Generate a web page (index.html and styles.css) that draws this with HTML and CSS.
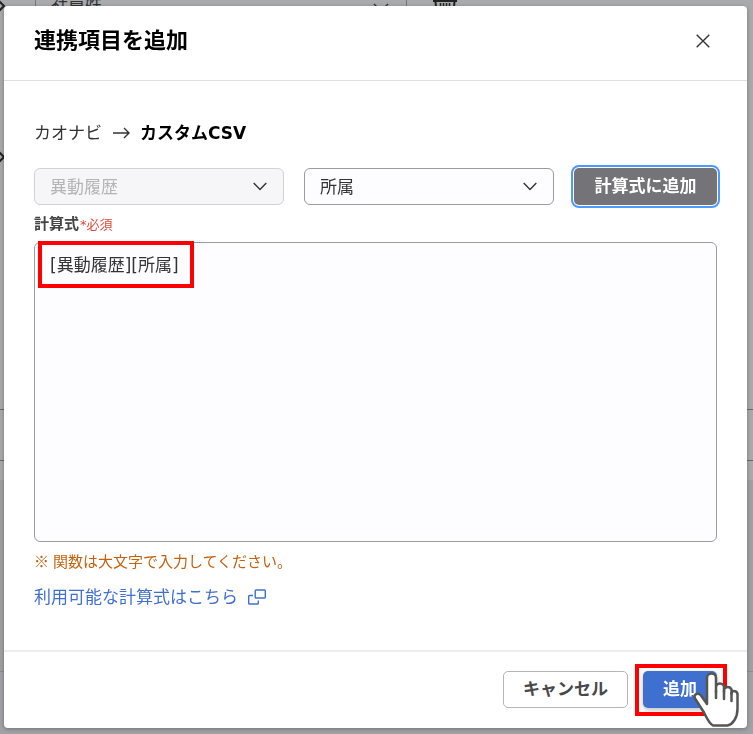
FILE: index.html
```html
<!DOCTYPE html>
<html lang="ja">
<head>
    <meta charset="UTF-8">
    <meta name="viewport" content="width=device-width, initial-scale=1.0">
    <title>連携項目を追加</title>
    <link rel="stylesheet" href="styles.css">
</head>
<body>
    <!-- 背面のページ -->
    <div class="backdrop" aria-hidden="true">
        <div class="page-top">
            <div class="page-field">
                <span>社員姓</span>
                <svg width="16" height="10" viewBox="0 0 16 10"><path d="M1 1l7 7 7-7"/></svg>
            </div>
            <svg class="trash" width="24" height="24" viewBox="0 0 24 24"><path stroke-width="3" d="M0 .5h24"/><path stroke-width="2" d="M2.500 2l2 20h15l2-20"/><path d="M7.500 3v14M10.500 3v14M13.500 3v14M16.500 3v14"/></svg>
        </div>
        <div class="page-row"></div>
        <div class="page-gap"></div>
        <div class="page-list"></div>
        <div class="page-foot"></div>
        <svg class="page-arrow arrow-top" width="6" height="12" viewBox="0 0 6 12"><path d="M-1 1l5 5-5 5"/></svg>
        <svg class="page-arrow arrow-middle" width="6" height="12" viewBox="0 0 6 12"><path d="M-1 1l5 5-5 5"/></svg>
    </div>

    <div class="modal" role="dialog" aria-labelledby="modal-title">
        <header class="modal-header">
            <h1 id="modal-title">連携項目を追加</h1>
            <button type="button" class="close" aria-label="閉じる">
                <svg width="14" height="14" viewBox="0 0 14 14"><path d="M.7.7l12.600 12.600M13.300.7L.7 13.300"/></svg>
            </button>
        </header>

        <div class="modal-body">
            <p class="mapping">
                <span>カオナビ</span>
                <svg width="18" height="12" viewBox="0 0 18 12" aria-hidden="true"><path d="M1 6h16M12 1l5 5-5 5"/></svg>
                <strong>カスタムCSV</strong>
            </p>

            <div class="selectors">
                <div class="select-box">
                    <select aria-label="シート" disabled>
                        <option>異動履歴</option>
                    </select>
                    <svg width="14" height="9" viewBox="0 0 14 9" aria-hidden="true"><path d="M.7 1L7 7.500 13.300 1"/></svg>
                </div>
                <div class="select-box">
                    <select aria-label="項目">
                        <option>所属</option>
                    </select>
                    <svg width="14" height="9" viewBox="0 0 14 9" aria-hidden="true"><path d="M.7 1L7 7.500 13.300 1"/></svg>
                </div>
                <button type="button" class="btn btn-gray">計算式に追加</button>
            </div>

            <label class="formula-label" for="formula">計算式<span class="required">*必須</span></label>
            <div class="formula">
                <textarea id="formula" spellcheck="false">[異動履歴][所属]</textarea>
                <span class="mark mark-formula"></span>
            </div>

            <p class="note">※ 関数は大文字で入力してください。</p>
            <a class="help" href="#">利用可能な計算式はこちら
                <svg width="18" height="16" viewBox="0 0 18 16" aria-hidden="true"><path d="M8 1h8.500a.8.8 0 0 1 .8.8v6.400a.8.8 0 0 1-.8.8H8a.8.8 0 0 1-.8-.8V1.800A.8.8 0 0 1 8 1zM5 6.500H1.500a.8.8 0 0 0-.8.8v6.900a.8.8 0 0 0 .8.8h8a.8.8 0 0 0 .8-.8V11.500"/></svg>
            </a>
        </div>

        <footer class="modal-footer">
            <button type="button" class="btn btn-outline">キャンセル</button>
            <div class="submit">
                <button type="button" class="btn btn-primary">追加</button>
                <span class="mark mark-submit"></span>
                <svg class="pointer" width="46" height="56" viewBox="0 0 46 56" aria-hidden="true">
                    <path d="M14 33V7a4.500 4.500 0 0 1 9 0v14V16.500a4 4 0 0 1 8 0V21v-2.500a4 4 0 0 1 7.500 0V23v-1.500a3.300 3.300 0 0 1 6 1.500V38c0 9-5 15.500-10 16.500H20c-4-2-6-7-9-13L2 27.500c-2-4 3-6.500 6-3L14 33z"/>
                    <path d="M23 20v7M31 20v8M38.500 22v8"/>
                </svg>
            </div>
        </footer>
    </div>
</body>
</html>
```

FILE: styles.css
```css
:root {
  --text: #333335;
  --blue: #3f6fcf;
  --line: #9b9ba0;
  --red: #ff0000;
}

* { box-sizing: border-box; }

body {
  margin: 0;
  color: var(--text);
  font-family: "DejaVu Sans", "Noto Sans CJK JP", sans-serif;
  font-size: 17px;
  line-height: 24px;
}

h1, p { margin: 0; }

button, select, textarea {
  font: inherit;
  color: inherit;
}

svg {
  fill: none;
  stroke: currentColor;
  stroke-width: 1.4;
}

/* 背面 */
.backdrop {
  position: fixed;
  inset: 0;
  display: flex;
  flex-direction: column;
  overflow: hidden;
  background: #a9aaab;
}

.page-top {
  display: flex;
  gap: 26px;
  height: 410px;
  padding-left: 35px;
  border-bottom: 1px solid #626a78;
}

.page-field {
  display: flex;
  justify-content: space-between;
  width: 372px;
  height: 24px;
  margin-top: -8px;
  padding: 0 17px 0 15px;
  border: 1px solid #77787b;
  border-top: 0;
}

.page-field svg { margin-top: 11px; }

.trash {
  color: #222;
  stroke-width: 1.5;
}

.page-row {
  height: 51px;
  border-bottom: 1px solid #626a78;
}

.page-gap { height: 19px; }

.page-list {
  height: 192px;
  background: #a0a0a3;
  border-bottom: 1px solid #8e8e91;
}

.page-foot {
  flex: 1;
  background: #a1a2a5;
}

.page-arrow {
  position: absolute;
  left: 0;
  color: #222;
  stroke-width: 2;
}

.arrow-top { top: 0; }
.arrow-middle { top: 151px; }

/* モーダル */
.modal {
  position: relative;
  margin: 6px 6px 6px 4px;
  background: #fff;
  border-radius: 4px;
  box-shadow: 0 1px 4px rgba(0, 0, 0, 0.3);
}

.modal-header {
  display: flex;
  align-items: center;
  justify-content: space-between;
  height: 75px;
  padding: 0 29px 4px 30px;
  border-bottom: 1px solid #dedee4;
}

.modal-header h1 {
  color: #000;
  font-size: 22px;
  line-height: 32px;
}

.close {
  display: flex;
  padding: 8px;
  border: 0;
  background: none;
  cursor: pointer;
}

.modal-body { padding: 40px 30px 41px; }

.mapping {
  display: flex;
  align-items: center;
  gap: 10px;
  margin-bottom: 23px;
}

.mapping strong { color: #000; }

.selectors {
  display: grid;
  grid-template-columns: 250fr 250fr 143fr;
  gap: 20px;
}

.select-box { position: relative; }

.select-box select {
  width: 100%;
  height: 37px;
  padding: 0 36px 0 15px;
  border: 1px solid var(--line);
  border-radius: 6px;
  background: #fdfdff;
  appearance: none;
}

.select-box select:disabled {
  border-color: #d2d2d6;
  background: #f6f6f8;
  color: #b4b4b6;
  opacity: 1;
}

.select-box svg {
  position: absolute;
  top: 14px;
  right: 17px;
  pointer-events: none;
}

.btn {
  height: 37px;
  padding: 0 19px 2px;
  border: 1px solid transparent;
  border-radius: 5px;
  font-weight: bold;
  line-height: 24px;
  white-space: nowrap;
  cursor: pointer;
}

.btn-gray {
  background: #747378;
  color: #fff;
  outline: 2px solid #4c9aff;
  outline-offset: 1px;
}

.formula-label {
  display: block;
  margin: 7px 0 5px;
  color: #444;
  font-size: 15px;
  font-weight: bold;
}

.required {
  margin-left: 1px;
  color: #e04a3a;
  font-size: 13px;
  font-weight: normal;
}

.formula { position: relative; }

.formula textarea {
  display: block;
  width: 100%;
  height: 300px;
  padding: 10px 15px;
  border: 1px solid var(--line);
  border-radius: 6px;
  background: #fdfdff;
  resize: none;
}

.note {
  margin: 7px 0 12px;
  color: #c4620e;
  font-family: "Open Sans", "Noto Sans CJK JP", sans-serif;
  font-size: 15px;
}

.help {
  display: inline-flex;
  align-items: center;
  gap: 10px;
  color: var(--blue);
  text-decoration: none;
}

.modal-footer {
  display: flex;
  justify-content: flex-end;
  gap: 15px;
  padding: 19px 30px 20px;
  border-top: 2px solid #ececee;
}

.btn-outline {
  border-color: #b5b5b9;
  background: #fff;
  color: #48484b;
}

.submit { position: relative; }

.btn-primary {
  background: var(--blue);
  color: #fff;
  box-shadow: 0 2px 5px rgba(0, 0, 0, 0.25);
}

/* 強調枠 */
.mark {
  position: absolute;
  border: 4px solid var(--red);
  pointer-events: none;
}

.mark-formula {
  top: -1px;
  left: 4px;
  width: 156px;
  height: 47px;
}

.mark-submit {
  inset: -7px -10px -8px -8px;
}

.pointer {
  position: absolute;
  top: 0;
  left: 50px;
  color: #555;
  fill: #fff;
  stroke-width: 2.5;
  stroke-linejoin: round;
  stroke-linecap: round;
  pointer-events: none;
}
```
